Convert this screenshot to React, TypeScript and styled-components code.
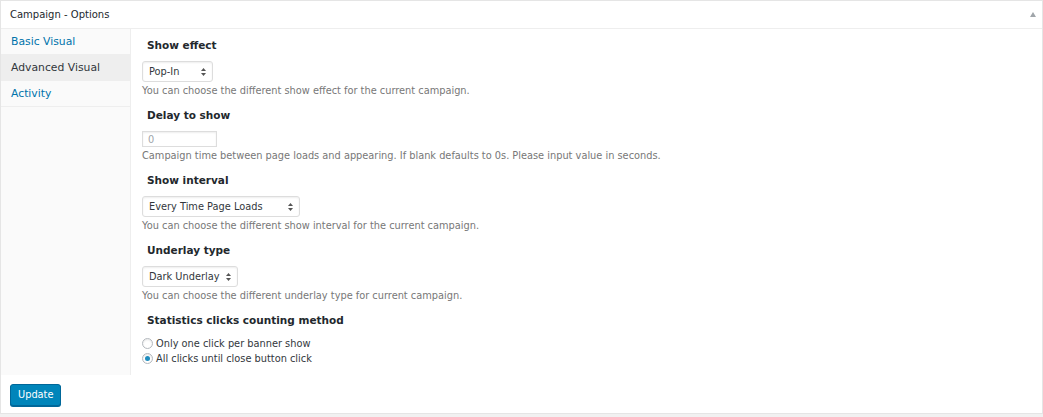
import React from "react";
import styled, { createGlobalStyle } from "styled-components";

const Global = createGlobalStyle`
  html, body { margin: 0; padding: 0; background: #f1f1f1; }
  body { font-family: "DejaVu Sans", Verdana, sans-serif; color: #23282d; }
  * { box-sizing: border-box; }
`;

const Box = styled.div`
  background: #fff;
  border: 1px solid #e5e5e5;
  box-shadow: 0 1px 1px rgba(0,0,0,0.04);
  height: 414px;
  display: flex;
  flex-direction: column;
`;

const Header = styled.div`
  height: 28px;
  border-bottom: 1px solid #eee;
  display: flex;
  align-items: center;
  justify-content: space-between;
  padding: 0 6px 0 9px;
  font-size: 10px;
  color: #23282d;
`;

const Toggle = styled.span`
  width: 0; height: 0;
  border-left: 3px solid transparent;
  border-right: 3px solid transparent;
  border-bottom: 5px solid #a0a5aa;
  margin-top: -1px;
`;

const Body = styled.div`
  display: flex;
  height: 346px;
`;

const Nav = styled.ul`
  list-style: none;
  margin: 0;
  padding: 0;
  width: 130px;
  background: #fafafa;
  border-right: 1px solid #eee;
`;

const NavItem = styled.li<{ $active?: boolean }>`
  height: 26px;
  display: flex;
  align-items: center;
  padding-left: 10px;
  font-size: 10.8px;
  border-bottom: 1px solid #eee;
  color: ${p => (p.$active ? "#32373c" : "#0073aa")};
  background: ${p => (p.$active ? "#eee" : "transparent")};
`;

const Content = styled.div`
  flex: 1;
  padding: 10px 0 0 11px;
`;

const Field = styled.div`
  margin-bottom: 12px;
`;

const Heading = styled.h4`
  margin: 0 0 9px 5px;
  font-size: 10.5px;
  font-weight: bold;
  line-height: 13px;
  color: #23282d;
`;

const SelectBox = styled.div<{ $w: number }>`
  width: ${p => p.$w}px;
  height: 21px;
  border: 1px solid #ddd;
  border-radius: 3px;
  box-shadow: inset 0 1px 2px rgba(0,0,0,0.07);
  display: flex;
  align-items: center;
  justify-content: space-between;
  padding: 0 6px 0 6px;
  font-size: 9.8px;
  color: #32373c;
  background: #fff;
`;

const TextInput = styled.div`
  width: 75px;
  height: 16px;
  border: 1px solid #ddd;
  box-shadow: inset 0 1px 2px rgba(0,0,0,0.07);
  display: flex;
  align-items: center;
  padding-left: 5px;
  font-size: 9.8px;
  color: #a0a5aa;
`;

const Desc = styled.p`
  margin: 2px 0 0 0;
  font-size: 9.8px;
  color: #777;
  line-height: 13px;
`;

const RadioRow = styled.label`
  display: flex;
  align-items: center;
  gap: 3px;
  font-size: 9.8px;
  color: #32373c;
  height: 15px;
`;

const RadioCircle = styled.span<{ $checked?: boolean }>`
  width: 11px;
  height: 11px;
  border-radius: 50%;
  border: 1px solid #b4b9be;
  box-shadow: inset 0 1px 2px rgba(0,0,0,0.1);
  display: flex;
  align-items: center;
  justify-content: center;
  &::after {
    content: "";
    display: ${p => (p.$checked ? "block" : "none")};
    width: 5px;
    height: 5px;
    border-radius: 50%;
    background: #1e8cbe;
  }
`;

const Footer = styled.div`
  flex: 1;
  padding: 8px 0 0 9px;
`;

const Button = styled.button`
  height: 22px;
  padding: 0 7px;
  background: #0085ba;
  border: 1px solid #006799;
  border-radius: 3px;
  box-shadow: 0 1px 0 #006799;
  color: #fff;
  font-family: "DejaVu Sans", Verdana, sans-serif;
  font-size: 9.8px;
`;

const Arrows = () => (
  <svg width="5" height="8" viewBox="0 0 5 8">
    <path d="M2.5 0 L5 3 L0 3 Z" fill="#555" />
    <path d="M2.5 8 L5 5 L0 5 Z" fill="#555" />
  </svg>
);

const Select = ({ value, w }: { value: string; w: number }) => (
  <SelectBox $w={w}>
    <span>{value}</span>
    <Arrows />
  </SelectBox>
);

export default function App() {
  return (
    <>
      <Global />
      <Box>
        <Header>
          <span>Campaign - Options</span>
          <Toggle />
        </Header>
        <Body>
          <Nav>
            <NavItem>Basic Visual</NavItem>
            <NavItem $active>Advanced Visual</NavItem>
            <NavItem>Activity</NavItem>
          </Nav>
          <Content>
            <Field>
              <Heading>Show effect</Heading>
              <Select value="Pop-In" w={71} />
              <Desc>You can choose the different show effect for the current campaign.</Desc>
            </Field>
            <Field>
              <Heading>Delay to show</Heading>
              <TextInput>0</TextInput>
              <Desc>Campaign time between page loads and appearing. If blank defaults to 0s. Please input value in seconds.</Desc>
            </Field>
            <Field>
              <Heading>Show interval</Heading>
              <Select value="Every Time Page Loads" w={158} />
              <Desc>You can choose the different show interval for the current campaign.</Desc>
            </Field>
            <Field>
              <Heading>Underlay type</Heading>
              <Select value="Dark Underlay" w={96} />
              <Desc>You can choose the different underlay type for current campaign.</Desc>
            </Field>
            <Field>
              <Heading>Statistics clicks counting method</Heading>
              <RadioRow><RadioCircle />Only one click per banner show</RadioRow>
              <RadioRow><RadioCircle $checked />All clicks until close button click</RadioRow>
            </Field>
          </Content>
        </Body>
        <Footer>
          <Button>Update</Button>
        </Footer>
      </Box>
    </>
  );
}
